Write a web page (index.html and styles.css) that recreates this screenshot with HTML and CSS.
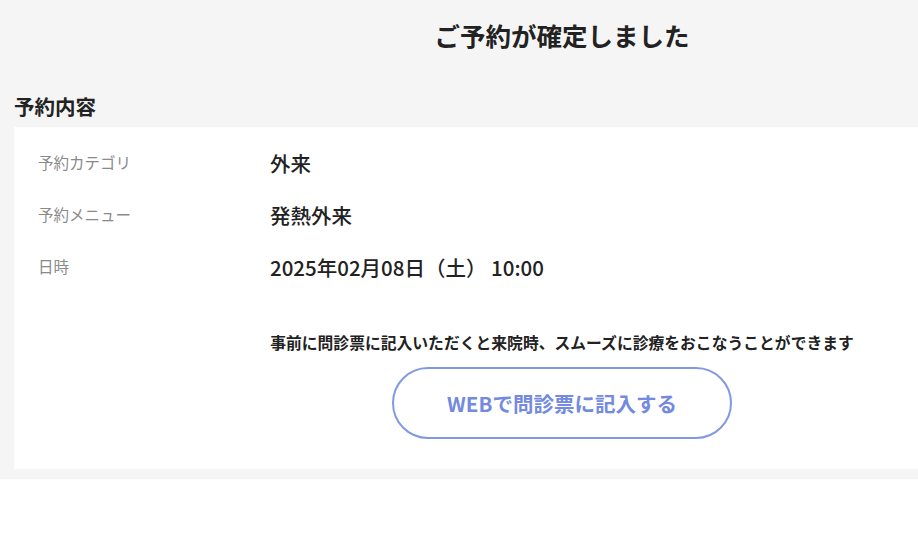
FILE: index.html
```html
<!DOCTYPE html>
<html lang="ja">
<head>
  <meta charset="UTF-8" />
  <meta name="viewport" content="width=device-width, initial-scale=1.0"/>
  <title>ご予約が確定しました</title>
  <link rel="stylesheet" href="styles.css">
</head>
<body>
  <div class="viewport">
    <div class="page">
      <h1 class="page-title">ご予約が確定しました</h1>
      <h2 class="section-title">予約内容</h2>
      <div class="card">
        <dl class="details">
          <div class="row">
            <dt>予約カテゴリ</dt>
            <dd>外来</dd>
          </div>
          <div class="row">
            <dt>予約メニュー</dt>
            <dd>発熱外来</dd>
          </div>
          <div class="row">
            <dt>日時</dt>
            <dd>2025年02月08日（土） 10:00</dd>
          </div>
        </dl>
        <p class="note">事前に問診票に記入いただくと来院時、スムーズに診療をおこなうことができます</p>
        <a class="web-button" href="#">WEBで問診票に記入する</a>
      </div>
    </div>
  </div>
</body>
</html>
```

FILE: styles.css
```css
* {
  box-sizing: border-box;
  font-family: 'Noto Sans CJK JP', 'Noto Sans', sans-serif;
}
html, body {
  margin: 0;
  padding: 0;
  background: #fff;
}
.viewport {
  width: 100%;
  overflow: hidden;
}
.page {
  width: 1124px;
  background: #f5f5f5;
  padding: 16px 14px 10px;
}
.page-title {
  margin: 0;
  text-align: center;
  font-size: 25.5px;
  font-weight: 700;
  line-height: 38px;
  color: #222;
}
.section-title {
  margin: 38px 0 0;
  font-size: 20.5px;
  font-weight: 700;
  line-height: 28px;
  color: #222;
  padding-bottom: 7px;
}
.card {
  background: #fff;
  padding: 10px 24px 30px;
  display: flex;
  flex-direction: column;
  align-items: center;
}
.details {
  margin: 0;
  width: 100%;
}
.row {
  display: grid;
  grid-template-columns: 232px 1fr;
  align-items: center;
  height: 52px;
}
.row dt {
  font-size: 15.5px;
  color: #8a8a8a;
  padding-bottom: 2px;
}
.row dd {
  margin: 0;
  font-size: 20.5px;
  font-weight: 500;
  color: #222;
}
.row dd.date {
  letter-spacing: 0.2px;
}
.note {
  margin: 39px 0 13px;
  font-size: 15.8px;
  font-weight: 700;
  line-height: 22px;
  color: #222;
}
.web-button {
  display: flex;
  align-items: center;
  justify-content: center;
  width: 340px;
  height: 72px;
  border: 2px solid #8198e3;
  border-radius: 36px;
  color: #7489e0;
  font-size: 20.5px;
  font-weight: 700;
  text-decoration: none;
}
```
